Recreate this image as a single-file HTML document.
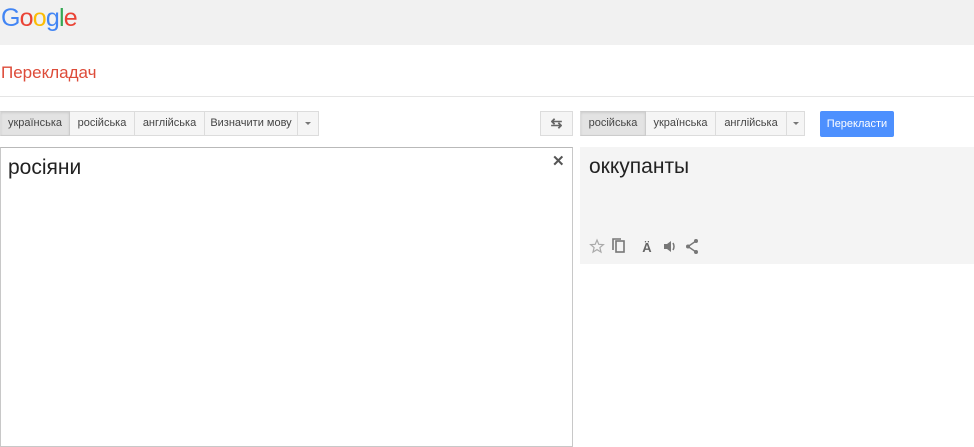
<!DOCTYPE html>
<html><head><meta charset="utf-8"><style>
*{margin:0;padding:0;box-sizing:border-box}
body{width:974px;height:429px;overflow:hidden;background:#fff;font-family:"Liberation Sans",Arial,sans-serif;position:relative}
.hdr{position:absolute;left:0;top:0;width:974px;height:45px;background:#f1f1f1}
.logo{position:absolute;left:1px;top:4px;font-size:25px;letter-spacing:-0.8px}
.title{position:absolute;left:1px;top:63px;font-size:17px;color:#dd4b39}
.hr{position:absolute;left:0;top:96px;width:974px;height:1px;background:#e5e5e5}
.bar{position:absolute;top:111px;height:25px;display:flex}
.b{height:25px;border:1px solid #dcdcdc;border-left:none;background:#f5f5f5;font-size:11px;color:#444;line-height:23px;text-align:center}
.b:first-child{border-left:1px solid #dcdcdc}
.sel{background:#e3e3e3;border-color:#ccc;box-shadow:inset 0 1px 2px rgba(0,0,0,.1)}
.caret{width:0;height:0;border-left:3px solid transparent;border-right:3px solid transparent;border-top:3px solid #777;display:inline-block;vertical-align:middle}
.src{position:absolute;left:0;top:147px;width:573px;height:300px;border:1px solid #c8c8c8;border-top-color:#b9b9b9}
.src .t{position:absolute;left:7px;top:8px;font-size:21px;color:#222}
.x{position:absolute;left:551px;top:4px;font-size:15px;color:#555;font-weight:bold}
.res{position:absolute;left:580px;top:147px;width:394px;height:117px;background:#f4f4f4}
.res .t{position:absolute;left:9px;top:8px;font-size:21px;color:#222}
.go{position:absolute;left:820px;top:111px;width:74px;height:26px;background:#4d90fe;border-radius:2px;color:#fff;font-size:11px;line-height:26px;text-align:center}
</style></head><body>
<div class="hdr"><div class="logo"><span style="color:#4285f4">G</span><span style="color:#ea4335">o</span><span style="color:#fbbc05">o</span><span style="color:#4285f4">g</span><span style="color:#34a853">l</span><span style="color:#ea4335">e</span></div></div>
<div class="title">Перекладач</div>
<div class="hr"></div>
<div class="bar" style="left:0">
<div class="b sel" style="width:70px">українська</div>
<div class="b" style="width:65px">російська</div>
<div class="b" style="width:70px">англійська</div>
<div class="b" style="width:93px">Визначити мову</div>
<div class="b" style="width:21px"><span class="caret"></span></div>
</div>
<div class="bar" style="left:540px"><div class="b" style="width:33px;font-size:14px;color:#666;font-weight:bold">⇆</div></div>
<div class="bar" style="left:580px">
<div class="b sel" style="width:66px">російська</div>
<div class="b" style="width:70px">українська</div>
<div class="b" style="width:71px">англійська</div>
<div class="b" style="width:18px"><span class="caret"></span></div>
</div>
<div class="go">Перекласти</div>
<div class="src"><div class="t">росіяни</div><div class="x">✕</div></div>
<div class="res"><div class="t">оккупанты</div>
<svg style="position:absolute;left:8px;top:90px" width="125" height="18" viewBox="0 0 125 18">
<path d="M9 3l1.8 4.3 4.6.3-3.5 3 1.1 4.5L9 12.6 5 15.1l1.1-4.5-3.5-3 4.6-.3z" fill="none" stroke="#aaa" stroke-width="1.2"/>
<rect x="28" y="4" width="8" height="11" fill="none" stroke="#777" stroke-width="1.6"/>
<path d="M25 13V2h8" fill="none" stroke="#777" stroke-width="1.6"/>
<text x="59" y="15" font-family="Liberation Sans" font-size="13" font-weight="bold" fill="#666" text-anchor="middle">Ä</text>
<path d="M76 7h3l4-3v11l-4-3h-3z" fill="#777"/><path d="M85 6q2 3.5 0 7" fill="none" stroke="#777" stroke-width="1.5"/>
<circle cx="108" cy="4" r="2" fill="#777"/><circle cx="100" cy="9.5" r="2" fill="#777"/><circle cx="108" cy="15" r="2" fill="#777"/>
<path d="M108 4l-8 5.5 8 5.5" fill="none" stroke="#777" stroke-width="1.4"/>
</svg></div>
</body></html>
